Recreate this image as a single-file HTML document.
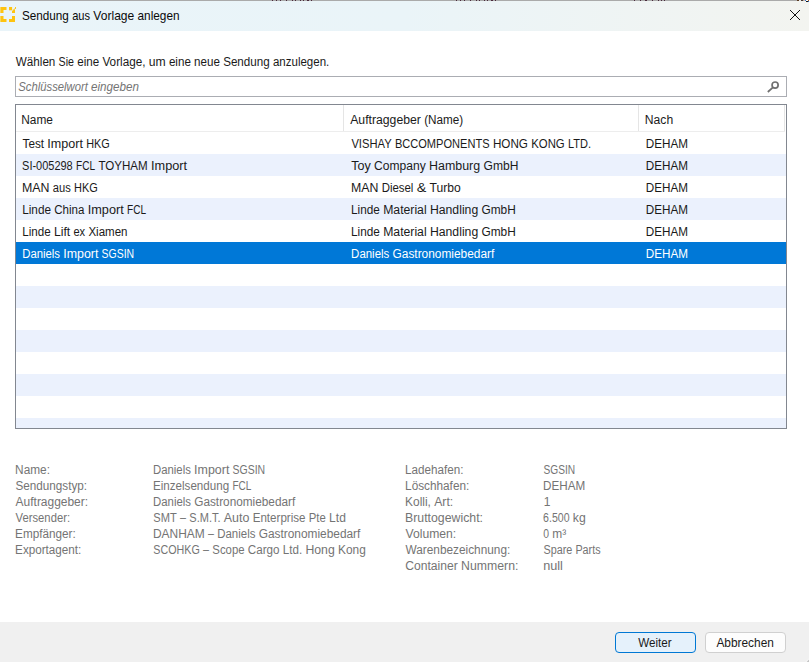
<!DOCTYPE html>
<html lang="de"><head><meta charset="utf-8"><title>Sendung aus Vorlage anlegen</title><style>
html,body{margin:0;padding:0}
body{width:809px;height:662px;position:relative;overflow:hidden;background:#fff;font-family:"Liberation Sans",sans-serif;font-size:12px;}
.t{position:absolute;left:0;white-space:pre;line-height:16px;height:16px;transform-origin:0 0}
.a{position:absolute}
</style></head><body>
<div class="titlebar">
<div class="a" style="left:0px;top:0px;width:809px;height:1px;background:#aaaaaa"></div>
<div class="a" style="left:0px;top:1px;width:809px;height:30px;background:linear-gradient(90deg,#e9f4f9 0%,#eaf4f8 50%,#f3f4f0 100%)"></div>
<div class="a" style="left:272px;top:0px;width:1.3px;height:1px;background:#4a2a3c"></div>
<div class="a" style="left:276.1px;top:0px;width:1.3px;height:1px;background:#4a2a3c"></div>
<div class="a" style="left:280.1px;top:0px;width:1.3px;height:1px;background:#4a2a3c"></div>
<div class="a" style="left:285.9px;top:0px;width:1.3px;height:1px;background:#4a2a3c"></div>
<div class="a" style="left:291.8px;top:0px;width:1.3px;height:1px;background:#4a2a3c"></div>
<div class="a" style="left:294.6px;top:0px;width:1.3px;height:1px;background:#4a2a3c"></div>
<div class="a" style="left:299.8px;top:0px;width:1.3px;height:1px;background:#4a2a3c"></div>
<div class="a" style="left:302.9px;top:0px;width:1.3px;height:1px;background:#4a2a3c"></div>
<div class="a" style="left:306.7px;top:0px;width:2.2px;height:1px;background:#4a2a3c"></div>
<div class="a" style="left:311px;top:0px;width:1.3px;height:1px;background:#4a2a3c"></div>
<div class="a" style="left:456px;top:0px;width:1.3px;height:1px;background:#4a2a3c"></div>
<div class="a" style="left:460.1px;top:0px;width:1.3px;height:1px;background:#4a2a3c"></div>
<div class="a" style="left:464.1px;top:0px;width:1.3px;height:1px;background:#4a2a3c"></div>
<div class="a" style="left:469.9px;top:0px;width:1.3px;height:1px;background:#4a2a3c"></div>
<div class="a" style="left:475.8px;top:0px;width:1.3px;height:1px;background:#4a2a3c"></div>
<div class="a" style="left:478.6px;top:0px;width:1.3px;height:1px;background:#4a2a3c"></div>
<div class="a" style="left:483.8px;top:0px;width:1.3px;height:1px;background:#4a2a3c"></div>
<div class="a" style="left:486.9px;top:0px;width:1.3px;height:1px;background:#4a2a3c"></div>
<div class="a" style="left:490.7px;top:0px;width:2.2px;height:1px;background:#4a2a3c"></div>
<div class="a" style="left:495px;top:0px;width:1.3px;height:1px;background:#4a2a3c"></div>
<div class="a" style="left:633.6px;top:0px;width:1.3px;height:1px;background:#4a2a3c"></div>
<div class="a" style="left:639.8px;top:0px;width:1.3px;height:1px;background:#4a2a3c"></div>
<div class="a" style="left:645.4px;top:0px;width:1.3px;height:1px;background:#4a2a3c"></div>
<div class="a" style="left:651.8px;top:0px;width:1.3px;height:1px;background:#4a2a3c"></div>
<div class="a" style="left:657.7px;top:0px;width:1.3px;height:1px;background:#4a2a3c"></div>
<div class="a" style="left:660.8px;top:0px;width:1.3px;height:1px;background:#4a2a3c"></div>
<div class="a" style="left:663.9px;top:0px;width:1.3px;height:1px;background:#4a2a3c"></div>
<div class="a" style="left:797px;top:0px;width:2px;height:1px;background:#5a3a20"></div>
<div class="a" style="left:799px;top:0px;width:1.5px;height:1px;background:#e8e8e8"></div>
<div class="a" style="left:801px;top:0px;width:2px;height:1px;background:#4a3a30"></div>
<div class="a" style="left:804px;top:0px;width:1px;height:1px;background:#e0b0a0"></div>
<div class="a" style="left:805px;top:0px;width:1px;height:1px;background:#2a80e0"></div>
<div class="a" style="left:806px;top:0px;width:2px;height:1px;background:#fafafa"></div>
<div class="a" style="left:808px;top:0px;width:1px;height:1px;background:#c06010"></div>
<div class="a" style="left:806px;top:1px;width:2px;height:1px;background:#181818"></div>
<div class="a" style="left:808px;top:1px;width:1px;height:1px;background:#2a70d0"></div>
<svg class="a" style="left:0;top:7px" width="17" height="16" viewBox="0 0 17 16"><g fill="#fec30f"><path d="M0 0H6.5V3H3.5V6H0Z"/><path d="M9 0H12.1V3.3H9Z"/><path d="M12 6H15V2L13.6 2.7L12 4.2Z"/><path d="M15 0.1H16V1.9H15Z" opacity="0.9"/><path d="M12.3 3.6L15.6 0.6" stroke="#fec30f" stroke-width="0.7" opacity="0.55"/><path d="M0 9H3.5V12H6.5V15H0Z"/><path d="M12 9H15V15H9V12H12Z"/></g><rect x="0" y="0" width="1" height="15" fill="#eaf4f9" opacity="0.35"/></svg>
<svg class="a" style="left:786px;top:6px" width="18" height="18" viewBox="0 0 18 18"><path d="M4 4 L14 14 M14 4 L4 14" stroke="#111" stroke-width="1" fill="none"/></svg>
<span class="t" style="top:8px;color:#0a0a0a;transform:translate(21.93px,-0.41px) scale(0.9775,1.050);">Sendung</span>
<span class="t" style="top:8px;color:#0a0a0a;transform:translate(72.18px,-0.41px) scale(0.9262,1.050);">aus</span>
<span class="t" style="top:8px;color:#0a0a0a;transform:translate(93.37px,-0.41px) scale(1.0041,1.050);">Vorlage</span>
<span class="t" style="top:8px;color:#0a0a0a;transform:translate(137.51px,-0.41px) scale(0.9846,1.050);">anlegen</span>
</div>
<div class="search">
<div class="a" style="left:15px;top:76px;width:770px;height:19px;border:1px solid #abadb3;background:#fff"></div>
<svg class="a" style="left:764px;top:78px" width="20" height="18" viewBox="0 0 20 18"><circle cx="11.1" cy="7.05" r="3.05" stroke="#707070" stroke-width="1.7" fill="none"/><path d="M8.95 9.35 L3.8 14.0" stroke="#707070" stroke-width="1.7" fill="none"/></svg>
<span class="t" style="top:54px;color:#1a1a1a;transform:translate(15.80px,0.00px) scale(0.9724,1.000);">Wählen</span>
<span class="t" style="top:54px;color:#1a1a1a;transform:translate(58.61px,0.00px) scale(0.8855,1.000);">Sie</span>
<span class="t" style="top:54px;color:#1a1a1a;transform:translate(77.21px,0.00px) scale(0.9682,1.000);">eine</span>
<span class="t" style="top:54px;color:#1a1a1a;transform:translate(102.42px,0.00px) scale(0.9781,1.000);">Vorlage,</span>
<span class="t" style="top:54px;color:#1a1a1a;transform:translate(148.74px,0.00px) scale(1.0136,1.000);">um</span>
<span class="t" style="top:54px;color:#1a1a1a;transform:translate(168.88px,0.00px) scale(0.9682,1.000);">eine</span>
<span class="t" style="top:54px;color:#1a1a1a;transform:translate(194.09px,0.00px) scale(0.9663,1.000);">neue</span>
<span class="t" style="top:54px;color:#1a1a1a;transform:translate(223.14px,0.00px) scale(0.9688,1.000);">Sendung</span>
<span class="t" style="top:54px;color:#1a1a1a;transform:translate(272.93px,0.00px) scale(0.9590,1.000);">anzulegen.</span>
<span class="t" style="top:78px;color:#747474;transform:translate(18.32px,0.50px) scale(0.9392,1.000);font-style:italic;">Schlüsselwort</span>
<span class="t" style="top:78px;color:#747474;transform:translate(91.04px,0.50px) scale(0.9707,1.000);font-style:italic;">eingeben</span>
</div>
<div class="list">
<div class="a" style="left:15px;top:104px;width:770px;height:323px;border:1px solid #828790;background:#fff"></div>
<div class="a" style="left:16px;top:154px;width:770px;height:22px;background:#ebf1fd"></div>
<div class="a" style="left:16px;top:198px;width:770px;height:22px;background:#ebf1fd"></div>
<div class="a" style="left:16px;top:286px;width:770px;height:22px;background:#ebf1fd"></div>
<div class="a" style="left:16px;top:330px;width:770px;height:22px;background:#ebf1fd"></div>
<div class="a" style="left:16px;top:374px;width:770px;height:22px;background:#ebf1fd"></div>
<div class="a" style="left:16px;top:418px;width:770px;height:10px;background:#ebf1fd"></div>
<div class="a" style="left:16px;top:242px;width:770px;height:22px;background:#0078d7"></div>
<div class="a" style="left:16px;top:131px;width:769px;height:1px;background:#ededed"></div>
<div class="a" style="left:343px;top:105px;width:1px;height:26px;background:#e5e5e5"></div>
<div class="a" style="left:638px;top:105px;width:1px;height:26px;background:#e5e5e5"></div>
<div class="a" style="left:784px;top:105px;width:1px;height:26px;background:#e5e5e5"></div>
<span class="t" style="top:112px;color:#1a1a1a;transform:translate(21.27px,0.00px) scale(0.9907,1.000);">Name</span>
<span class="t" style="top:112px;color:#1a1a1a;transform:translate(350.20px,0.00px) scale(1.0190,1.000);">Auftraggeber</span>
<span class="t" style="top:112px;color:#1a1a1a;transform:translate(424.19px,0.00px) scale(0.9753,1.000);">(Name)</span>
<span class="t" style="top:112px;color:#1a1a1a;transform:translate(644.85px,0.00px) scale(1.0113,1.000);">Nach</span>
<span class="t" style="top:136px;color:#1a1a1a;transform:translate(22.52px,0.00px) scale(0.9797,1.000);">Test</span>
<span class="t" style="top:136px;color:#1a1a1a;transform:translate(47.34px,0.00px) scale(1.0461,1.000);">Import</span>
<span class="t" style="top:136px;color:#1a1a1a;transform:translate(86.18px,0.00px) scale(0.9049,1.000);">HKG</span>
<span class="t" style="top:136px;color:#1a1a1a;transform:translate(351.40px,0.00px) scale(0.9320,1.000);">VISHAY</span>
<span class="t" style="top:136px;color:#1a1a1a;transform:translate(394.90px,0.00px) scale(0.9221,1.000);">BCCOMPONENTS</span>
<span class="t" style="top:136px;color:#1a1a1a;transform:translate(492.89px,0.00px) scale(0.9729,1.000);">HONG</span>
<span class="t" style="top:136px;color:#1a1a1a;transform:translate(531.22px,0.00px) scale(0.9465,1.000);">KONG</span>
<span class="t" style="top:136px;color:#1a1a1a;transform:translate(567.98px,0.00px) scale(0.9204,1.000);">LTD.</span>
<span class="t" style="top:136px;color:#1a1a1a;transform:translate(645.79px,0.00px) scale(0.9750,1.000);">DEHAM</span>
<span class="t" style="top:158px;color:#1a1a1a;transform:translate(22.06px,0.00px) scale(0.9150,1.000);">SI-005298</span>
<span class="t" style="top:158px;color:#1a1a1a;transform:translate(76.03px,0.00px) scale(0.8402,1.000);">FCL</span>
<span class="t" style="top:158px;color:#1a1a1a;transform:translate(98.39px,0.00px) scale(0.9644,1.000);">TOYHAM</span>
<span class="t" style="top:158px;color:#1a1a1a;transform:translate(150.99px,0.00px) scale(1.0604,1.000);">Import</span>
<span class="t" style="top:158px;color:#1a1a1a;transform:translate(351.20px,0.00px) scale(1.0451,1.000);">Toy</span>
<span class="t" style="top:158px;color:#1a1a1a;transform:translate(374.08px,0.00px) scale(1.0049,1.000);">Company</span>
<span class="t" style="top:158px;color:#1a1a1a;transform:translate(429.04px,0.00px) scale(1.0356,1.000);">Hamburg</span>
<span class="t" style="top:158px;color:#1a1a1a;transform:translate(483.51px,0.00px) scale(1.0058,1.000);">GmbH</span>
<span class="t" style="top:158px;color:#1a1a1a;transform:translate(645.79px,0.00px) scale(0.9750,1.000);">DEHAM</span>
<span class="t" style="top:180px;color:#1a1a1a;transform:translate(22.03px,0.00px) scale(1.0298,1.000);">MAN</span>
<span class="t" style="top:180px;color:#1a1a1a;transform:translate(52.78px,0.00px) scale(0.9286,1.000);">aus</span>
<span class="t" style="top:180px;color:#1a1a1a;transform:translate(74.03px,0.00px) scale(0.9109,1.000);">HKG</span>
<span class="t" style="top:180px;color:#1a1a1a;transform:translate(351.04px,0.00px) scale(1.0261,1.000);">MAN</span>
<span class="t" style="top:180px;color:#1a1a1a;transform:translate(381.67px,0.00px) scale(0.9514,1.000);">Diesel</span>
<span class="t" style="top:180px;color:#1a1a1a;transform:translate(416.67px,0.00px) scale(1.1951,1.000);">&amp;</span>
<span class="t" style="top:180px;color:#1a1a1a;transform:translate(429.50px,0.00px) scale(1.0092,1.000);">Turbo</span>
<span class="t" style="top:180px;color:#1a1a1a;transform:translate(645.79px,0.00px) scale(0.9750,1.000);">DEHAM</span>
<span class="t" style="top:202px;color:#1a1a1a;transform:translate(22.18px,0.00px) scale(0.9811,1.000);">Linde</span>
<span class="t" style="top:202px;color:#1a1a1a;transform:translate(54.29px,0.00px) scale(0.9614,1.000);">China</span>
<span class="t" style="top:202px;color:#1a1a1a;transform:translate(87.73px,0.00px) scale(1.0586,1.000);">Import</span>
<span class="t" style="top:202px;color:#1a1a1a;transform:translate(127.04px,0.00px) scale(0.8388,1.000);">FCL</span>
<span class="t" style="top:202px;color:#1a1a1a;transform:translate(351.08px,0.00px) scale(0.9802,1.000);">Linde</span>
<span class="t" style="top:202px;color:#1a1a1a;transform:translate(383.16px,0.00px) scale(1.0182,1.000);">Material</span>
<span class="t" style="top:202px;color:#1a1a1a;transform:translate(429.91px,0.00px) scale(1.0198,1.000);">Handling</span>
<span class="t" style="top:202px;color:#1a1a1a;transform:translate(481.52px,0.00px) scale(0.9878,1.000);">GmbH</span>
<span class="t" style="top:202px;color:#1a1a1a;transform:translate(645.79px,0.00px) scale(0.9750,1.000);">DEHAM</span>
<span class="t" style="top:224px;color:#1a1a1a;transform:translate(22.19px,0.00px) scale(0.9695,1.000);">Linde</span>
<span class="t" style="top:224px;color:#1a1a1a;transform:translate(53.92px,0.00px) scale(1.0154,1.000);">Lift</span>
<span class="t" style="top:224px;color:#1a1a1a;transform:translate(73.44px,0.00px) scale(0.9227,1.000);">ex</span>
<span class="t" style="top:224px;color:#1a1a1a;transform:translate(88.39px,0.00px) scale(0.9623,1.000);">Xiamen</span>
<span class="t" style="top:224px;color:#1a1a1a;transform:translate(351.08px,0.00px) scale(0.9802,1.000);">Linde</span>
<span class="t" style="top:224px;color:#1a1a1a;transform:translate(383.16px,0.00px) scale(1.0182,1.000);">Material</span>
<span class="t" style="top:224px;color:#1a1a1a;transform:translate(429.91px,0.00px) scale(1.0198,1.000);">Handling</span>
<span class="t" style="top:224px;color:#1a1a1a;transform:translate(481.52px,0.00px) scale(0.9878,1.000);">GmbH</span>
<span class="t" style="top:224px;color:#1a1a1a;transform:translate(645.79px,0.00px) scale(0.9750,1.000);">DEHAM</span>
<span class="t" style="top:246px;color:#fff;transform:translate(22.22px,0.00px) scale(0.9439,1.000);">Daniels</span>
<span class="t" style="top:246px;color:#fff;transform:translate(63.22px,0.00px) scale(1.0345,1.000);">Import</span>
<span class="t" style="top:246px;color:#fff;transform:translate(101.62px,0.00px) scale(0.8711,1.000);">SGSIN</span>
<span class="t" style="top:246px;color:#fff;transform:translate(351.11px,0.00px) scale(0.9545,1.000);">Daniels</span>
<span class="t" style="top:246px;color:#fff;transform:translate(392.57px,0.00px) scale(0.9900,1.000);">Gastronomiebedarf</span>
<span class="t" style="top:246px;color:#fff;transform:translate(645.79px,0.00px) scale(0.9750,1.000);">DEHAM</span>
</div>
<div class="details">

<span class="t" style="top:462px;color:#747474;transform:translate(15.07px,0.00px) scale(0.9873,1.000);">Name:</span>
<span class="t" style="top:462px;color:#747474;transform:translate(153.01px,0.00px) scale(0.9456,1.000);">Daniels</span>
<span class="t" style="top:462px;color:#747474;transform:translate(194.09px,0.00px) scale(1.0364,1.000);">Import</span>
<span class="t" style="top:462px;color:#747474;transform:translate(232.57px,0.00px) scale(0.8727,1.000);">SGSIN</span>
<span class="t" style="top:478px;color:#747474;transform:translate(15.43px,0.00px) scale(0.9760,1.000);">Sendungstyp:</span>
<span class="t" style="top:478px;color:#747474;transform:translate(152.99px,0.00px) scale(0.9674,1.000);">Einzelsendung</span>
<span class="t" style="top:478px;color:#747474;transform:translate(232.44px,0.00px) scale(0.8343,1.000);">FCL</span>
<span class="t" style="top:494px;color:#747474;transform:translate(15.60px,0.00px) scale(0.9968,1.000);">Auftraggeber:</span>
<span class="t" style="top:494px;color:#747474;transform:translate(153.01px,0.00px) scale(0.9485,1.000);">Daniels</span>
<span class="t" style="top:494px;color:#747474;transform:translate(194.21px,0.00px) scale(0.9837,1.000);">Gastronomiebedarf</span>
<span class="t" style="top:510px;color:#747474;transform:translate(15.60px,0.00px) scale(0.9376,1.000);">Versender:</span>
<span class="t" style="top:510px;color:#747474;transform:translate(153.35px,0.00px) scale(0.9239,1.000);">SMT</span>
<span class="t" style="top:510px;color:#747474;transform:translate(180.04px,0.00px) scale(0.8981,1.000);">–</span>
<span class="t" style="top:510px;color:#747474;transform:translate(189.32px,0.00px) scale(0.9176,1.000);">S.M.T.</span>
<span class="t" style="top:510px;color:#747474;transform:translate(223.80px,0.00px) scale(1.0369,1.000);">Auto</span>
<span class="t" style="top:510px;color:#747474;transform:translate(252.68px,0.00px) scale(0.9657,1.000);">Enterprise</span>
<span class="t" style="top:510px;color:#747474;transform:translate(308.78px,0.00px) scale(0.9464,1.000);">Pte</span>
<span class="t" style="top:510px;color:#747474;transform:translate(329.11px,0.00px) scale(1.0050,1.000);">Ltd</span>
<span class="t" style="top:526px;color:#747474;transform:translate(15.08px,0.00px) scale(0.9781,1.000);">Empfänger:</span>
<span class="t" style="top:526px;color:#747474;transform:translate(152.97px,0.00px) scale(0.9955,1.000);">DANHAM</span>
<span class="t" style="top:526px;color:#747474;transform:translate(208.00px,0.00px) scale(0.8923,1.000);">–</span>
<span class="t" style="top:526px;color:#747474;transform:translate(217.22px,0.00px) scale(0.9544,1.000);">Daniels</span>
<span class="t" style="top:526px;color:#747474;transform:translate(258.68px,0.00px) scale(0.9899,1.000);">Gastronomiebedarf</span>
<span class="t" style="top:542px;color:#747474;transform:translate(15.09px,0.00px) scale(0.9739,1.000);">Exportagent:</span>
<span class="t" style="top:542px;color:#747474;transform:translate(153.37px,0.00px) scale(0.8927,1.000);">SCOHKG</span>
<span class="t" style="top:542px;color:#747474;transform:translate(203.07px,0.00px) scale(0.8966,1.000);">–</span>
<span class="t" style="top:542px;color:#747474;transform:translate(212.33px,0.00px) scale(0.9460,1.000);">Scope</span>
<span class="t" style="top:542px;color:#747474;transform:translate(247.80px,0.00px) scale(0.9705,1.000);">Cargo</span>
<span class="t" style="top:542px;color:#747474;transform:translate(282.79px,0.00px) scale(0.9658,1.000);">Ltd.</span>
<span class="t" style="top:542px;color:#747474;transform:translate(305.40px,0.00px) scale(1.0222,1.000);">Hong</span>
<span class="t" style="top:542px;color:#747474;transform:translate(338.00px,0.00px) scale(0.9906,1.000);">Kong</span>
<span class="t" style="top:462px;color:#747474;transform:translate(405.09px,0.00px) scale(0.9718,1.000);">Ladehafen:</span>
<span class="t" style="top:462px;color:#747474;transform:translate(543.48px,0.00px) scale(0.8475,1.000);">SGSIN</span>
<span class="t" style="top:478px;color:#747474;transform:translate(405.08px,0.00px) scale(0.9816,1.000);">Löschhafen:</span>
<span class="t" style="top:478px;color:#747474;transform:translate(543.09px,0.00px) scale(0.9714,1.000);">DEHAM</span>
<span class="t" style="top:494px;color:#747474;transform:translate(405.07px,0.00px) scale(0.9927,1.000);">Kolli,</span>
<span class="t" style="top:494px;color:#747474;transform:translate(434.24px,0.00px) scale(1.0155,1.000);">Art:</span>
<span class="t" style="top:494px;color:#747474;transform:translate(543.75px,0.00px) scale(1.0000,1.000);">1</span>
<span class="t" style="top:510px;color:#747474;transform:translate(405.04px,0.00px) scale(1.0255,1.000);">Bruttogewicht:</span>
<span class="t" style="top:510px;color:#747474;transform:translate(543.11px,0.00px) scale(0.8789,1.000);">6.500</span>
<span class="t" style="top:510px;color:#747474;transform:translate(572.76px,0.00px) scale(1.0201,1.000);">kg</span>
<span class="t" style="top:526px;color:#747474;transform:translate(405.50px,0.00px) scale(1.0133,1.000);">Volumen:</span>
<span class="t" style="top:526px;color:#747474;transform:translate(543.27px,0.00px) scale(0.8676,1.000);">0</span>
<span class="t" style="top:526px;color:#747474;transform:translate(552.24px,0.00px) scale(0.9949,1.000);">m³</span>
<span class="t" style="top:542px;color:#747474;transform:translate(405.50px,0.00px) scale(0.9857,1.000);">Warenbezeichnung:</span>
<span class="t" style="top:542px;color:#747474;transform:translate(543.46px,0.00px) scale(0.8992,1.000);">Spare</span>
<span class="t" style="top:542px;color:#747474;transform:translate(575.41px,0.00px) scale(0.8970,1.000);">Parts</span>
<span class="t" style="top:558px;color:#747474;transform:translate(405.23px,0.00px) scale(1.0095,1.000);">Container</span>
<span class="t" style="top:558px;color:#747474;transform:translate(461.11px,0.00px) scale(1.0231,1.000);">Nummern:</span>
<span class="t" style="top:558px;color:#747474;transform:translate(543.21px,0.00px) scale(1.0561,1.000);">null</span>
</div>
<div class="footer">
<div class="a" style="left:0px;top:622px;width:809px;height:40px;background:#f0f0f0"></div>
<div class="a" style="left:615px;top:632px;width:79px;height:19px;border:1px solid #0078d4;border-radius:4px;background:#e5f1fb"></div>
<div class="a" style="left:705px;top:632px;width:79px;height:19px;border:1px solid #d0d0d0;border-radius:4px;background:#fdfdfd"></div>
<svg class="a" style="left:797px;top:650px" width="12" height="12" viewBox="0 0 12 12"><path d="M12 8.2 L12 12 L8.2 12 Z" fill="#f8f8f8"/><path d="M12 9.6 L12 12 L9.6 12 Z" fill="#c4c4c4"/></svg>
<span class="t" style="top:635px;color:#1a1a1a;transform:translate(638.20px,0.00px) scale(0.9682,1.000);">Weiter</span>
<span class="t" style="top:635px;color:#1a1a1a;transform:translate(716.40px,0.00px) scale(0.9901,1.000);">Abbrechen</span>
</div>
</body></html>
